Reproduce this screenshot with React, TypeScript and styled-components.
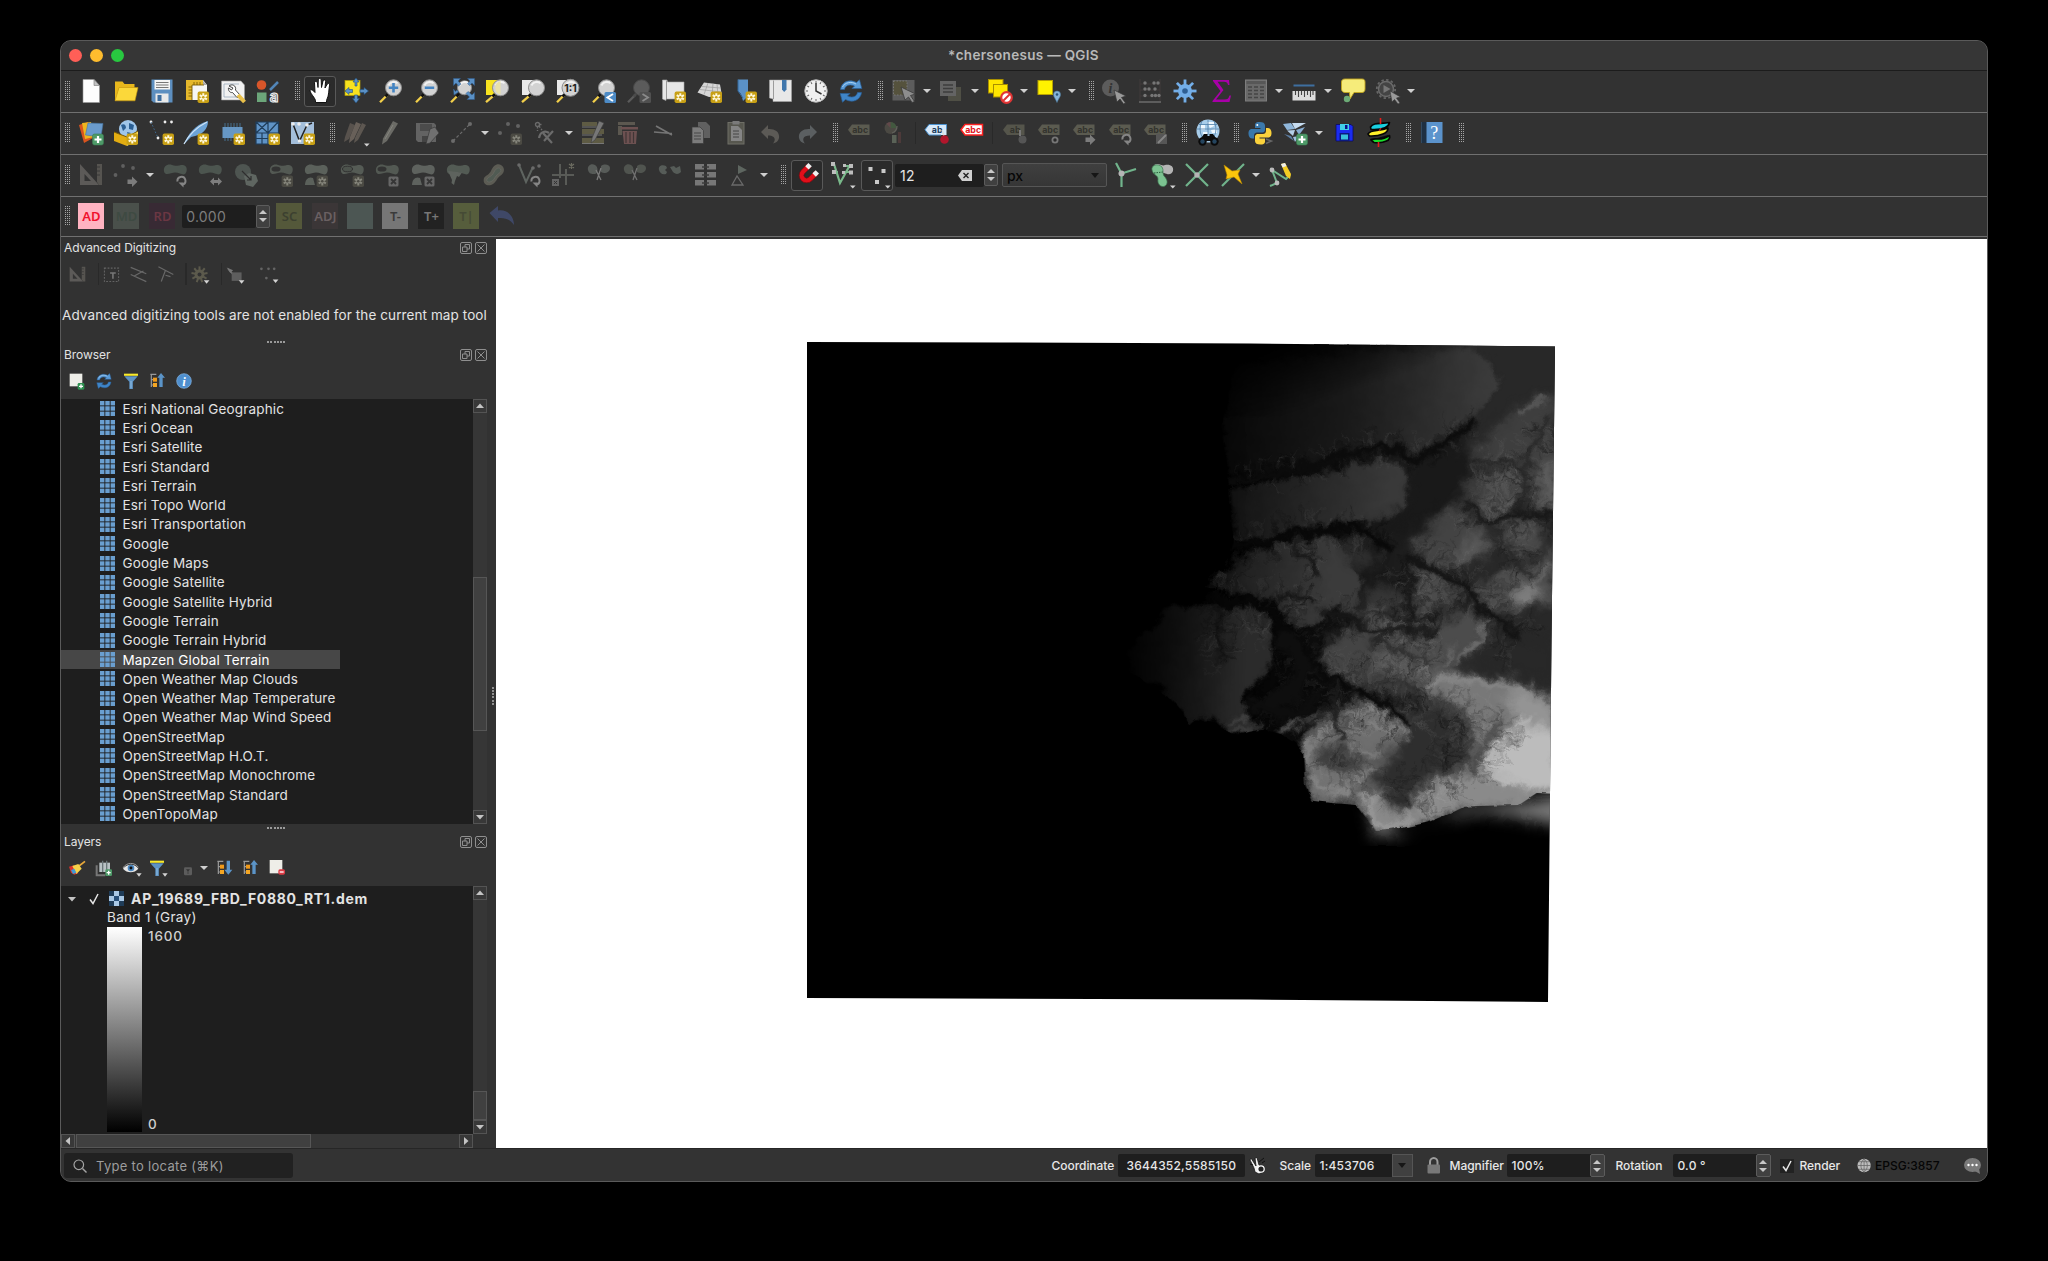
import React, { ReactNode } from 'react';
import styled, { createGlobalStyle } from 'styled-components';

const Global = createGlobalStyle`
  * { box-sizing: border-box; }
  body { margin: 0; background: #000; overflow: hidden; }
`;

const Desktop = styled.div`
  width: 2048px;
  height: 1261px;
  padding: 40px 60px 79px;
  background: #000;
  font-family: Inter, "Liberation Sans", sans-serif;
  color: #e3e3e3;
`;

const Window = styled.div`
  display: flex;
  flex-direction: column;
  width: 1928px;
  height: 1142px;
  border: 1px solid #5a5a5a;
  border-radius: 11px;
  overflow: hidden;
  background: #323232;
`;

const TitleBar = styled.header`
  display: grid;
  grid-template-columns: 100px 1fr 100px;
  align-items: center;
  height: 30px;
  flex: none;
  padding: 0 8.5px 1px 7.5px;
  background: #363636;
  border-bottom: 1px solid #1c1c1c;
`;

const Lights = styled.div`
  display: flex;
  gap: 8.4px;
`;

const Light = styled.span<{ $color: string }>`
  width: 13px;
  height: 13px;
  border-radius: 50%;
  background: ${(p) => p.$color};
`;

const WindowTitle = styled.h1`
  margin: 0;
  text-align: center;
  font-size: 13.5px;
  font-weight: 600;
  letter-spacing: 0.3px;
  color: #b9b9b9;
`;

const ToolbarRow = styled.div<{ $height?: number }>`
  display: flex;
  align-items: center;
  height: ${(p) => p.$height ?? 42}px;
  flex: none;
  padding-bottom: 1px;
  border-bottom: 1px solid #707070;
`;

const Handle = styled.span<{ $first?: boolean }>`
  display: flex;
  justify-content: flex-end;
  flex: none;
  width: ${(p) => (p.$first ? 12.3 : 17.1)}px;
  padding-right: 2px;
  &::after {
    content: '';
    width: 6px;
    height: 20px;
    background: repeating-linear-gradient(0deg, #333 0 1px, transparent 1px 2px),
      repeating-linear-gradient(90deg, #a6a6a6 0 1px, #333 1px 2px);
  }
`;

const ToolCell = styled.span`
  display: flex;
  align-items: center;
  justify-content: center;
  flex: none;
  width: 35.4px;
  height: 36px;
`;

const ToolButton = styled.span<{ $checked?: boolean }>`
  display: flex;
  align-items: center;
  justify-content: center;
  width: 32px;
  height: 31px;
  border-radius: 3px;
  border: 1px solid ${(p) => (p.$checked ? '#595959' : 'transparent')};
  background: ${(p) => (p.$checked ? '#2b2b2b' : 'transparent')};
`;

const MenuArrow = styled.span`
  display: flex;
  flex: none;
  width: 13px;
  padding-left: 1.5px;
  &::after {
    content: '';
    border: 4px solid transparent;
    border-top: 4.5px solid #d0d0d0;
    border-bottom: 0;
  }
`;

const Separator = styled.span<{ $gap?: number }>`
  flex: none;
  width: ${(p) => p.$gap ?? 6.5}px;
  height: 22px;
  background: linear-gradient(90deg, transparent 45%, #292929 45% 60%, transparent 60%);
`;

const Glyph = styled.svg<{ $size?: number }>`
  display: block;
  flex: none;
  width: ${(p) => p.$size ?? 24}px;
  height: ${(p) => p.$size ?? 24}px;
  overflow: visible;
`;

/* ---------- shared icon parts ---------- */

const Star = ({ off }: { off?: boolean }) => (
  <g>
    <rect x="12.6" y="12.6" width="11.4" height="11.4" rx="1.8" fill={off ? '#4b4a43' : '#c8a015'} />
    <path
      d="M18.3 14.2V22.4M14.7 16.2L21.9 20.4M21.9 16.2L14.7 20.4"
      stroke={off ? '#85857b' : '#fff8dc'}
      strokeWidth="2"
    />
    <circle cx="18.3" cy="18.3" r="1.3" fill={off ? '#4b4a43' : '#c8a015'} />
  </g>
);
const Plus = () => (
  <g>
    <rect x="13.5" y="13" width="11" height="11" rx="2" fill="#4e9a68" stroke="#3a7d52" strokeWidth=".6" />
    <path d="M19 15V22M15.5 18.5H22.5" stroke="#fff" strokeWidth="2.2" />
  </g>
);
const Cross = () => (
  <g>
    <rect x="13.5" y="13.5" width="10" height="10" rx="1.5" fill="#676767" />
    <path d="M16 16L21 21M21 16L16 21" stroke="#363636" strokeWidth="1.8" />
  </g>
);
const Corner = () => <path d="M20 22.6H25.6L22.8 25.4Z" fill="#d4d4d4" />;
const GoArrow = ({ c = '#7c7c7c' }: { c?: string }) => (
  <path d="M13.5 16.5H18V13.5L23.5 18.8L18 24V21H13.5Z" fill={c} />
);
const Rotate = () => (
  <g>
    <path d="M14.5 18.5A4 4 0 1 1 20 21.5" fill="none" stroke="#858585" strokeWidth="2" />
    <path d="M15.500 19.500H20.500V24.500Z" fill="#858585" />
  </g>
);
const Lens = ({ cx = 14.5, r = 8, off }: { cx?: number; r?: number; off?: boolean }) => (
  <g>
    <path d={`M1 23.2L${cx - 6} 15.8`} stroke={off ? '#5b5b5b' : '#f2cf4a'} strokeWidth="2.3" />
    <path d={`M${cx - 8} 17.5L${cx - 5.5} 14.8`} stroke={off ? '#4b4b4b' : '#111'} strokeWidth="2.6" />
    <circle cx={cx} cy="8.8" r={r} fill={off ? '#5b5b5b' : '#d2d2d2'} stroke={off ? '#484848' : '#8d8d8d'} strokeWidth="1" />
    {!off && <path d={`M${cx - 5} 6.5A6 6 0 0 1 ${cx + 4} 4.2`} stroke="#f2f2f2" strokeWidth="1.8" fill="none" />}
  </g>
);
const Tag = ({ fill = '#5b5b50', ink = '#33332e', text = 'abc', y = 3.5 }) => (
  <g>
    <path d={`M1 ${y + 5.2}L5 ${y}H22.5V${y + 10.5}H5Z`} fill={fill} />
    <text x="13.2" y={y + 8.4} fontSize="8.8" fontWeight="700" textAnchor="middle" fill={ink} fontFamily="Inter, sans-serif">
      {text}
    </text>
  </g>
);
const Blob = ({ c = '#5a605b' }: { c?: string }) => (
  <path d="M1 8.500C0 3 5 .5 9 2C12.500 3.800 16 2 20 2C24.500 2.500 24.500 8 22.500 10.500C20 13 17 9.500 12 9.500C8 9.500 2.500 13.500 1 8.500Z" fill={c} />
);
const Refresh = () => (
  <g>
    <path d="M1.5 10.5C2.500 3 10 -0.500 17.500 3.500L20.500 0.800L22.800 9.500L13 9.500L15.500 7C10 4.500 6 7 5.500 10.500Z" fill="#5a9bd8" stroke="#2a6099" strokeWidth=".7" />
    <path d="M22.500 13.500C21.500 21 14 24.500 6.500 20.500L3.500 23.200L1.200 14.500L11 14.500L8.500 17C14 19.500 18 17 18.500 13.500Z" fill="#3f85c8" stroke="#2a6099" strokeWidth=".7" />
    <path d="M3.500 8C6 3.500 12 2 17 5" stroke="#a8d0f2" strokeWidth="1" fill="none" />
  </g>
);
const Tree = ({ up }: { up?: boolean }) => (
  <g>
    <path d="M2 2H11M3.500 2V21M3.500 10H8M3.500 18H8" stroke="#9a9a9a" strokeWidth="1.800" fill="none" />
    <rect x="6" y="7" width="6" height="6" fill="#f09a1a" />
    <rect x="6" y="15" width="6" height="6" fill="#f5a623" />
    {up ? (
      <path d="M18 0L24 7H20.500V21H15.500V7H12.500Z" fill="#5b94c8" />
    ) : (
      <path d="M18.500 22L24.500 14.500H21V1H16V14.500H12.500Z" fill="#5b94c8" />
    )}
  </g>
);
const Funnel = () => (
  <g>
    <path d="M2 5H22L14.800 13V24H9.500V13Z" fill="#5d93c4" />
    <path d="M12 12V23" stroke="#91bde3" strokeWidth="1.500" />
    <rect x="1.500" y="1" width="21" height="3.200" fill="#f8ea2c" />
  </g>
);
const Gear = ({ c, hole = '#323232', n = 8, r = 7 }: { c: string; hole?: string; n?: number; r?: number }) => (
  <g>
    {Array.from({ length: n }, (_, i) => (
      <rect key={i} x="10.600" y={11.500 - r - 4} width="2.800" height="6" fill={c} transform={`rotate(${(i * 360) / n} 12 12)`} />
    ))}
    <circle cx="12" cy="12" r={r} fill={c} />
    <circle cx="12" cy="12" r={r * 0.4} fill={hole} />
  </g>
);
const Letters = ({ bg, ink, children }: { bg: string; ink: string; children: string }) => (
  <g>
    <rect x="-1" y="-1" width="26" height="26" fill={bg} />
    <text x="12.500" y="16.800" fontSize="13" fontWeight="600" textAnchor="middle" fill={ink} fontFamily='"Noto Sans", sans-serif'>
      {children}
    </text>
  </g>
);
const dots = (pts: number[][], c: string, r = 1.6) => pts.map(([x, y], i) => <circle key={i} cx={x} cy={y} r={r} fill={c} />);

/* ---------- icon set ---------- */

const icons: Record<string, ReactNode> = {
  newDoc: (
    <g>
      <path d="M4 .5H15L20.500 6.500V23.500H4Z" fill="#fdfdfd" stroke="#999" strokeWidth=".6" />
      <path d="M15 .5V6.500H20.500Z" fill="#c2c2c2" stroke="#777" strokeWidth=".6" />
    </g>
  ),
  open: (
    <g>
      <path d="M1 21.500V2.500H8.500L10.500 5H20.500V9H5L2 21.500Z" fill="#e8b71c" />
      <path d="M5 8.500H24L21 21.800H1Z" fill="#fbd83a" stroke="#c4930c" strokeWidth=".6" />
    </g>
  ),
  save: (
    <g>
      <path d="M1.500 .5H22.500V23.500H3.500L1.500 21.500Z" fill="#5d8fc0" />
      <rect x="4.500" y="1" width="15.500" height="9.500" fill="#f4f4f4" />
      <path d="M6 3.500H18.500M6 6H18.500M6 8.500H18.500" stroke="#777" strokeWidth="1" />
      <rect x="5.500" y="14.500" width="13" height="9" fill="#e9e9e9" />
      <rect x="7.500" y="16" width="4" height="6" fill="#3f6fa0" />
    </g>
  ),
  layout: (
    <g>
      <path d="M1 1H18L22 6V21H1Z" fill="#f6f6f6" />
      <path d="M17 1V6H22Z" fill="#aaa" />
      <path d="M1 1H18V6H7V21H1Z" fill="#e5b82c" />
      <path d="M7 6H19M7 6V21M3.500 8H7M3.500 11H7M3.500 14H7M3.500 17H7M9 3V6M12 3V6M15 3V6" stroke="#7a5c00" strokeWidth=".9" />
      <Star />
    </g>
  ),
  layoutMgr: (
    <g>
      <path d="M.5 2H20L23.500 6V21H.5Z" fill="#f2f2f2" stroke="#999" strokeWidth=".6" />
      <path d="M3 5H18M3 5V18H18" fill="none" stroke="#9ab" strokeWidth=".8" />
      <path d="M8 7C11 4.500 15.500 6.500 14.500 11L19 16L16 18.500L11.500 13.500C8.500 14 7 11 7.500 9L10.500 11L12 9Z" fill="#fff" stroke="#333" strokeWidth=".9" />
      <path d="M17 16L23.500 23" stroke="#e9c04a" strokeWidth="4" />
    </g>
  ),
  style: (
    <g>
      <circle cx="5.500" cy="6" r="4.800" fill="#d9562a" />
      <path d="M14 11L22 3" stroke="#5286b8" strokeWidth="2.500" />
      <rect x="1" y="13.500" width="9.500" height="9.500" fill="#6ca67a" />
      <text x="18" y="23" fontSize="15" fontWeight="700" textAnchor="middle" fill="#777" stroke="#f2f2f2" strokeWidth="1" fontFamily="Inter, sans-serif">a</text>
    </g>
  ),
  pan: (
    <path
      transform="translate(1 -.5)"
      d="M6.500 22C6 19.500 1.500 15 1 12.500C1 10.500 3.500 10.800 6 14L5.500 4.500C5.500 2.500 8 2.500 8.500 4.500L9 9L9.300 1.500C9.500 -0.500 12 -0.500 12.200 1.500L12.500 9L14 2.500C14.500 .8 16.800 1.200 16.600 3L16 9.500L18.300 5.500C19.500 4 21 5 20.600 6.600C19.500 11 20.500 16 17.500 22V24H6.500Z"
      fill="#fff" stroke="#111" strokeWidth="1"
    />
  ),
  panSel: (
    <g>
      <rect x="1" y="1.500" width="15" height="15" fill="#f7e21f" stroke="#b7a000" strokeWidth=".7" />
      <g fill="#5a90c5" stroke="#24507c" strokeWidth=".6">
        <path d="M12 -1L15 3H13V7H11V3H9Z" />
        <path d="M12 24L15.500 19.500H13.500V16H10.500V19.500H8.500Z" />
        <path d="M24.500 12L20 8.500V10.500H16V13.500H20V15.500Z" />
        <path d="M1 12L5 8.500V10.500H8.500V13.500H5V15.500Z" />
      </g>
    </g>
  ),
  zoomIn: (
    <g><Lens /><path d="M14.500 4V13.500M9.800 8.800H19.200" stroke="#4484c2" strokeWidth="2.600" /></g>
  ),
  zoomOut: (
    <g><Lens /><path d="M9.800 8.800H19.200" stroke="#4484c2" strokeWidth="2.600" /></g>
  ),
  zoomFull: (
    <g>
      <Lens r={7} />
      <g fill="#5a90c5" stroke="#2c5d90" strokeWidth=".5">
        <path d="M3.500 -.5H10.500L8 2L11 5L8.500 7L6 4L3.500 6.500Z" />
        <path d="M24.500 -.5V6.500L22 4L19.500 6.500L17.500 4.500L20 2L17.500 -.5Z" />
        <path d="M24.500 20.500H17L19.500 18L16 14.500L18 12.500L22 16L24.500 13.500Z" />
        <path d="M3.500 10L5.500 12.500L7 11L8.500 13L4 16Z" />
      </g>
    </g>
  ),
  zoomSel: (
    <g><rect x="1" y="1" width="13" height="15" fill="#f7e21f" /><Lens cx={15.500} /><path d="M15.500 2A7 7 0 0 0 15.500 15.600Z" fill="#e9e1a8" /></g>
  ),
  zoomLayer: (
    <g><rect x="1" y="1" width="13" height="15" fill="#e9e9e9" /><Lens cx={15.500} /></g>
  ),
  zoomNative: (
    <g>
      <rect x="1" y="1" width="13" height="15" fill="#e9e9e9" /><Lens cx={14.500} r={8.500} />
      <text x="14.500" y="12.600" fontSize="10.500" fontWeight="700" textAnchor="middle" fill="#222" fontFamily="Inter, sans-serif">1:1</text>
    </g>
  ),
  zoomLast: (
    <g><Lens /><rect x="12.500" y="13" width="11.500" height="11" rx="1.500" fill="#4d8bc6" /><path d="M21 15L15.500 18.500L21 22" stroke="#fff" strokeWidth="2" fill="none" /></g>
  ),
  zoomNext: (
    <g><Lens off /><rect x="12.500" y="13" width="11.500" height="11" rx="1.500" fill="#505050" /><path d="M15.500 15L21 18.500L15.500 22" stroke="#8a8a8a" strokeWidth="1.800" fill="none" /></g>
  ),
  mapView: (
    <g><path d="M.5 1H5L5.500 3H22V20H4V21.500L.5 20Z" fill="#e6e6e6" stroke="#aaa" strokeWidth=".6" /><path d="M4.500 1.500V20" stroke="#999" /><Star /></g>
  ),
  view3d: (
    <g><path d="M6 3.500L22 5.500L24 17L11 18L-.5 13.500Z" fill="#d6d6d6" /><path d="M4 7.500L22.500 9M2 10.500L23 13M10 4L6 15.500M15 4.500L14 17.500M19 5L20 17" stroke="#9c9c9c" strokeWidth=".7" /><Star /></g>
  ),
  bookmarkNew: (<g><path d="M5 .5H15V17L10 22L8 15L5 12Z" fill="#5b91c6" /><path d="M5 .5V12L10 19" stroke="#33689c" fill="none" /><Star /></g>),
  bookmarks: (
    <g><path d="M.5 1H22.500V22.500H4V20L.5 19Z" fill="#e8e8e8" stroke="#aaa" strokeWidth=".5" /><path d="M4.500 1.500V20" stroke="#9c9c9c" /><path d="M13 1H17.500V10.500L15.200 13L13 10.500Z" fill="#3f76ac" /></g>
  ),
  clock: (
    <g>
      <circle cx="12" cy="12" r="11.200" fill="#f0f0f0" stroke="#bbb" />
      {Array.from({ length: 12 }, (_, i) => <path key={i} d="M12 2V4" stroke="#666" strokeWidth="1" transform={`rotate(${i * 30} 12 12)`} />)}
      <path d="M12 4V12L17.500 15" stroke="#333" strokeWidth="1.500" fill="none" />
    </g>
  ),
  refresh: <Refresh />,
  selectRect: (
    <g><rect x=".5" y="1" width="22" height="20.500" fill="#5c5c5c" /><rect x="1.500" y="2" width="13.500" height="14" fill="#55523d" stroke="#777" strokeDasharray="1.500 1.500" /><path d="M9 8L23.500 15L18.500 16.500L22.500 22.500L20 23.500L16.500 18L13 21Z" fill="#8d8d8d" stroke="#3a3a3a" strokeWidth=".8" /></g>
  ),
  selectForm: (<g><rect x="0" y="2" width="16" height="15" fill="#646464" /><path d="M3 6H13M3 9.500H13M3 13H13" stroke="#3d3d3d" strokeWidth="1.300" /><path d="M16 8H21V22H8V17H16Z" fill="#4f4f45" /></g>),
  deselect: (
    <g><rect x="-.5" y=".5" width="14.500" height="13.500" fill="#ffe600" stroke="#a88f00" /><rect x="4.500" y="5.500" width="14" height="12.500" fill="#ffe600" stroke="#a88f00" /><circle cx="17.500" cy="18.500" r="5.300" fill="#fff" stroke="#e03434" strokeWidth="2.200" /><path d="M14 22L21 15" stroke="#e03434" strokeWidth="2" /></g>
  ),
  selectLoc: (
    <g><rect x="1" y="1.500" width="14.500" height="14" fill="#fff200" stroke="#b8a200" /><path d="M20 23.500C18.500 19.500 16.500 18 16.500 15.500A3.500 3.500 0 0 1 23.500 15.500C23.500 18 21.500 19.500 20 23.500Z" fill="#86b4d8" stroke="#4c7a9f" strokeWidth=".6" /><circle cx="20" cy="15.500" r="1.300" fill="#29547a" /></g>
  ),
  identify: (
    <g><circle cx="8.500" cy="9" r="8.500" fill="#5c5c5c" /><text x="8.500" y="14" fontSize="14" fontStyle="italic" fontWeight="700" textAnchor="middle" fill="#333" fontFamily='"Liberation Serif", serif'>i</text><path d="M12 11L24 17L19.500 18.500L23.500 24L21.500 25L18 20L15 23Z" fill="#9a9a9a" stroke="#333" strokeWidth=".7" /></g>
  ),
  fieldCalc: (
    <g><path d="M2 0V22M22 0V22M2 5H22M2 11H22M2 17H22" stroke="#403b3b" strokeWidth="1" /><path d="M1 23H23" stroke="#6c6c6c" strokeWidth="1.500" />{dots([[7, 4], [16, 4], [20, 4], [7, 10], [11, 10], [17, 10], [7, 16.500], [14, 16.500], [17.500, 16.500], [21, 16.500]], '#767676', 1.700)}</g>
  ),
  toolbox: <Gear c="#73aee8" hole="#2f5f94" />,
  sigma: (<path d="M4 1H20L20.500 6H19C18.500 3.500 17.500 2.700 15 2.700H8.500L14.500 11L7 20.500H15.500C18.500 20.500 19.500 19.500 20.500 16.500H22L20.500 23H3.500V22L11.500 12L4 2Z" fill="#a800a8" />),
  table: (<g><rect x="1.500" y="1" width="21" height="21" fill="#696969" stroke="#7d7d7d" /><rect x="2.500" y="2" width="19" height="3" fill="#575757" /><path d="M4 8H8M10 8H14M16 8H20M4 11.500H8M10 11.500H14M16 11.500H20M4 15H8M10 15H14M16 15H20M4 18.500H8M10 18.500H14M16 18.500H20" stroke="#444" strokeWidth="1.600" /></g>),
  measure: (<g><rect x="1.500" y="5.500" width="21" height="2" fill="#3e6f9f" /><rect x=".5" y="12" width="23" height="9.500" fill="#dcdcdc" /><path d="M3.500 12V16M6.500 12V18M9.500 12V16M12.500 12V18M15.500 12V16M18.500 12V18M21 12V16" stroke="#444" strokeWidth="1.100" /></g>),
  tips: (<g><path d="M4 0H21C23 0 24 1 24 3V10C24 12 23 13.500 21 13.500H13L9 20L8.500 13.500H4C2 13.500 .5 12 .5 10V3C.5 1 2 0 4 0Z" fill="#f6ec7a" stroke="#c3a61d" strokeWidth=".9" /><circle cx="6" cy="20" r="3.200" fill="#6cab76" /></g>),
  action: (
    <g>
      <circle cx="10" cy="10" r="9.200" fill="none" stroke="#666" strokeWidth="1.800" strokeDasharray="2.400 2.400" />
      <circle cx="10" cy="10" r="7.500" fill="#444" stroke="#6b6b6b" strokeWidth="1.500" />
      <path d="M7.500 6L14.500 10L7.500 14Z" fill="#777" />
      <path d="M14 12L24.500 18L20.500 19L24 24L22 25L18.500 20.500L16 23Z" fill="#999" stroke="#333" strokeWidth=".6" />
    </g>
  ),

  dsm: (<g><path d="M0 4L9 1L14 17L5 22Z" fill="#d9541e" /><path d="M3 2L12 1L15 16L6 18Z" fill="#eeb51f" /><path d="M9 2L24 2.500L22 16L6.500 14Z" fill="#6a9bcc" stroke="#44739f" strokeWidth=".6" /><Plus /></g>),
  geopackage: (
    <g><circle cx="14" cy="8" r="9" fill="#9fc6ea" /><path d="M7 4C10 2 12 4 12 7L9 10ZM15 2L20 4L19 9L15 8ZM13 11L17 12L14 14Z" fill="#2a5f94" /><path d="M0 11L13 16V25L0 20Z" fill="#e3ad12" /><path d="M13 16L24 10V19L13 25Z" fill="#f7d95c" /><path d="M0 11L13 16L24 10" stroke="#7a5b00" fill="none" /><Star /></g>
  ),
  shapefile: (<g>{dots([[1, 1], [15, 1], [21.500, 1], [8, 17]], '#eee', 1.400)}<path d="M1 1L8 17" stroke="#3e6b94" strokeWidth="1" strokeDasharray="1.500 2" /><Star /></g>),
  spatialite: (<g><path d="M-1 23C3 14 9 4 23 0C23 8 18 14 6 16Z" fill="#6ca3d6" /><path d="M-1 23C5 12 12 6 22 1" stroke="#cfe4f6" fill="none" strokeWidth="1.200" /><Star /></g>),
  memory: (<g><rect x="1.500" y="6" width="20" height="11" fill="#6797c4" /><path d="M4 2V6M7 2V6M10 2V6M13 2V6M16 2V6M19 2V6M4 17V20M7 17V20M10 17V20" stroke="#47718f" strokeWidth="1" /><Star /></g>),
  mesh: (<g><rect x="0" y="1" width="22.500" height="22" fill="#5f93c6" /><path d="M0 1H22.500V23H0ZM0 12H22.500M12 1V23M0 1L12 12L22 1M0 12L12 1M0 17.500H12M6 12V23" stroke="#1f3d5a" strokeWidth="1.200" fill="none" /><Star /></g>),
  virtual: (<g><rect x="0" y="1" width="23" height="22" fill="#a4bfdb" /><path d="M2 3L8.500 20L16 4L21 2" stroke="#222" strokeWidth="1.500" fill="none" />{dots([[2, 3], [8.500, 20], [16, 4], [8, 3]], '#eee', 1.800)}<Star /></g>),
  editsCurrent: (<g fill="#686059"><path d="M6 2L11 4L5 18L0 21L1 16Z" opacity=".7" /><path d="M12 1L17 3L10 18L5 22L6 16Z" /><path d="M18 2L22 4L14 19L10 22L11 17Z" opacity=".8" /><Corner /></g>),
  pencil: (<g><path d="M14 0L19 2.500L8 20L3 23.500L4 17.500Z" fill="#6b6b66" /><path d="M14 4L6 18" stroke="#84847d" strokeWidth="1" /></g>),
  saveEdits: (<g><path d="M1 2H19L21 4V21H3L1 19Z" fill="#636363" /><rect x="5" y="3" width="12" height="7" fill="#4b4b4b" /><path d="M7 15H14V21H7Z" fill="#444" /><path d="M15 8L20 6L24 12L15 22L11 23L12 19Z" fill="#707070" stroke="#3a3a3a" strokeWidth=".7" /></g>),
  addLine: (<g><path d="M3 20L20 3" stroke="#6b6b6b" strokeWidth="1.200" strokeDasharray="3 2" />{dots([[3, 20], [20, 3]], '#6b6b6b', 2)}</g>),
  addPoint: (<g>{dots([[2, 12], [10, 3], [20, 5]], '#626262', 2)}<Star off /></g>),
  vertex: (<g stroke="#6b6b6b" strokeWidth="1.400" fill="none"><circle cx="3.500" cy="3.500" r="2" /><path d="M5.500 3.500H9M3.500 5.500V10M5 5L8 9" strokeDasharray="2 1.500" /><path d="M9 12L18 22M10 20L19 10" strokeWidth="2.200" /><path d="M5 17C6 11 11 9 15 12" strokeWidth="2.200" /></g>),
  multiEdit: (<g><path d="M0 1H15V5H0ZM0 8H22V13H0ZM0 17H22V22H0Z" fill="#5e5b44" /><path d="M0 6H18M0 14H20M0 22.500H22" stroke="#777" /><path d="M17 0L22 2L13 19L9 22L10 17Z" fill="#777" stroke="#3c3c3c" strokeWidth=".6" /></g>),
  trash: (<g><path d="M0 1H17V4H0ZM0 5H4V14H0Z" fill="#5c5850" /><path d="M3 6H20V8.500H3ZM4.500 10H19L18 23H6Z" fill="#6d5151" /><path d="M8 11V22M12 11V22M15.500 11V22" stroke="#403636" strokeWidth="1.200" /></g>),
  cut: (<path d="M3 5L19 14M1 11L19 12.500" stroke="#757575" strokeWidth="1.700" />),
  copy: (<g><path d="M10 1H18L22 5V17H10Z" fill="#606060" /><path d="M4 6H12L15.500 9.500V22.500H4Z" fill="#7c7c7c" stroke="#3b3b3b" strokeWidth=".7" /><path d="M6 12H13M6 15H13M6 18H13" stroke="#474747" /></g>),
  paste: (<g><rect x="4" y="1.500" width="16" height="21.500" fill="#57574f" stroke="#6e6e66" /><path d="M7 5H14L18 9V20H7Z" fill="#858585" /><path d="M9 10H15M9 13H15M9 16H15" stroke="#444" /><rect x="8.500" y="0" width="7" height="3.500" fill="#7a7a7a" /></g>),
  undo: (<path d="M2 11L9 4V8C16 7.500 21 11 20 17C19.500 20 17 22 14 22.500C17 19 16.500 14.500 9 14.500V18Z" fill="#5c5a56" />),
  redo: (<path d="M22 11L15 4V8C8 7.500 3 11 4 17C4.500 20 7 22 10 22.500C7 19 7.500 14.500 15 14.500V18Z" fill="#5b5f61" />),
  label: <Tag />,
  diagram: (<g><circle cx="8.500" cy="7" r="6" fill="#4b4943" /><path d="M8.500 7L8.500 1A6 6 0 0 1 14.500 7Z" fill="#42583f" /><path d="M8.500 7L4.300 2.800A6 6 0 0 1 8.500 1Z" fill="#62484a" /><path d="M10 12C13 11 15 8 15 5" stroke="#60605a" strokeWidth="1.300" fill="none" /><rect x="10" y="14" width="4.500" height="8" fill="#5a6257" /><rect x="16" y="11" width="3" height="11" fill="#4d3a3a" /></g>),
  labelPin: (<g><Tag fill="#d7eafb" ink="#1d3d5c" text="ab" /><path d="M18 9L20 15" stroke="#ddd" strokeWidth="1.500" /><circle cx="20.500" cy="18.500" r="4.300" fill="#b1162c" /><path d="M1 8.700L5 3.500H22.500V8M1 8.700L5 14H17" fill="none" stroke="#4c93d0" strokeWidth="1" /></g>),
  labelRed: (<g><Tag fill="#fff" ink="#e01525" /><path d="M1 8.700L5 3.500H22.500V14H5Z" fill="none" stroke="#f22" strokeWidth="1.500" /></g>),
  labelPinOff: (<g><Tag text="ab" fill="#55554b" /><circle cx="20.500" cy="18.500" r="4" fill="#555" /><path d="M18 9V15" stroke="#777" strokeWidth="2" /></g>),
  labelShow: (<g><Tag /><circle cx="18" cy="19" r="3.500" fill="#777" /><circle cx="18" cy="19" r="1.700" fill="#2a2a2a" /></g>),
  labelMove: (<g><Tag /><GoArrow /></g>),
  labelRotate: (<g><Tag /><Rotate /></g>),
  labelEdit: (<g><Tag /><rect x="13" y="13" width="11" height="10" fill="#565656" /><path d="M15 22L23 14" stroke="#858585" strokeWidth="2" /></g>),
  search: (
    <g><circle cx="12" cy="10" r="11.500" fill="#a8cdea" /><path d="M4 4H9V9H5ZM11 1H18V5L14 7ZM7 11H12V13H7ZM15 9L21 7V12H16Z" fill="#eef7fe" /><path d="M1 8H23M3 3.500H21M12 -1V14M6 0Q2 8 6 16M18 0Q22 8 18 16" stroke="#4e7fa8" strokeWidth=".8" fill="none" /><path d="M8 13H11.500V15H13.500V13H17L22 20H3Z" fill="#0a0a0a" /><circle cx="6.500" cy="20.500" r="4.200" fill="#0a0a0a" /><circle cx="18.500" cy="20.500" r="4.200" fill="#0a0a0a" /><circle cx="6.500" cy="20.500" r="2.200" fill="#24445e" /><circle cx="18.500" cy="20.500" r="2.200" fill="#24445e" /></g>
  ),
  python: (
    <g><path d="M11.500 1C7 1 7 3 7 4.500V7H12.500V8H4C1 8 .5 10.500 .5 12.500S1.500 17.500 4 17.500H6V14.500C6 12.500 7.500 11.500 9 11.500H14.500C16 11.500 17 10 17 9V4.500C17 2 15 1 11.500 1Z" fill="#3a78ab" /><circle cx="9.300" cy="4" r="1" fill="#fff" /><path d="M12.500 23.500C17 23.500 17 21.500 17 20V17.500H11.500V16.500H20C23 16.500 23.500 14 23.500 12S22.500 7 20 7H18V10C18 12 16.500 13 15 13H9.500C8 13 7 14.500 7 15.500V20C7 22.500 9 23.500 12.500 23.500Z" fill="#fbd23c" /><path d="M18 18L23.500 20L18 22.500" stroke="#666" strokeWidth="1.500" fill="none" /></g>
  ),
  meshTool: (<g><path d="M0 3L8 2L12 8L4 9Z" fill="#8fb6da" /><path d="M9 2H23L12 8Z" fill="#c6dcf0" /><path d="M4 9.500L12 9L10 15Z" fill="#b4cfe8" /><path d="M13 9L22 6L16 14Z" fill="#87aed4" /><path d="M10 16L16 15L12 21Z" fill="#9fc0e0" /><path d="M1 13L8 15L11 20Z" fill="#5c7da0" /><Plus /></g>),
  floppy: (<g><path d="M4 3.500H19L21 5.500V20H4Z" fill="#1b2cf0" stroke="#0a0a5c" strokeWidth=".8" /><rect x="8" y="3" width="9" height="6" fill="#41d0e8" /><rect x="13" y="4" width="2.500" height="4" fill="#0a108a" /><rect x="7.500" y="12" width="10" height="8" fill="#0b1a80" /><rect x="9" y="13.500" width="7" height="5" fill="#38c0dd" /></g>),
  stack: (
    <g>
      <path d="M3 19L21 14L22 20L6 22Z" fill="#0c0c0c" />
      <g strokeWidth="1.600" stroke="#050505" strokeLinejoin="round">
        <path d="M4 18.500C10 16.500 14 20.500 22.500 14.500C24 19 18 22.500 7 21.500Z" fill="#19dd2c" />
        <path d="M1 13C4 8 12 11 21 7C21.500 12 13 15.500 2.500 15Z" fill="#fff02a" />
        <path d="M3.500 6C7 .5 14 3.500 22.500 1.500C21.500 7 14 9 4 8.500Z" fill="#19cfe0" />
      </g>
      <path d="M13.500 -3V3M11.500 21V26" stroke="#e61a1a" strokeWidth="1.600" />
      <path d="M14 7L12 10" stroke="#c22" strokeWidth="1.200" />
    </g>
  ),
  help: (<g><rect x="1.500" y="1" width="21" height="21" fill="#5b93cc" /><rect x="1.500" y="1" width="5" height="21" fill="#1f3042" /><text x="14.300" y="18" fontSize="18" textAnchor="middle" fill="#fff" fontFamily='"Liberation Serif", serif'>?</text></g>),

  cad: (<g><path d="M1 1V22H20Z" fill="#5c5a58" /><path d="M5.500 11V18H12Z" fill="#333" /><path d="M18 1H23V22H20L18 19Z" fill="#565450" /><path d="M18 4H21M18 8H21M18 12H21" stroke="#383838" /></g>),
  moveFeat: (<g>{dots([[1.500, 12], [9, 3], [19, 5]], '#5f5f5f', 1.900)}<GoArrow /></g>),
  blobRotate: (<g><Blob c="#4c554f" /><Rotate /></g>),
  blobScale: (<g><Blob c="#4c554f" /><path d="M12 18.500L16 14.500V17H20V14.500L24 18.500L20 22.500V20H16V22.500Z" fill="#7e7e7e" /></g>),
  simplify: (<g><circle cx="9" cy="9" r="8" fill="#4e5551" /><path d="M10 13L15 10L22 12L24 18L19 24L12 22Z" fill="#5f6661" /><path d="M8 8L17 17M17 13V17H13" stroke="#2e2e2e" strokeWidth="1.200" fill="none" /></g>),
  addRing: (<g><Blob c="#535953" /><ellipse cx="7" cy="6" rx="4.500" ry="2.600" fill="#333" /><Star off /></g>),
  addPart: (<g><Blob c="#5b615b" /><path d="M1 22C1 16 5 13 9 15L11 22Z" fill="#5b615b" /><Star off /></g>),
  fillRing: (<g><Blob c="#555b55" /><ellipse cx="7.500" cy="6" rx="5" ry="2.800" fill="#4d534d" stroke="#303030" strokeWidth="1" /><Star off /></g>),
  delRing: (<g><Blob c="#535953" /><ellipse cx="7" cy="6" rx="4.500" ry="2.600" fill="#333" /><Cross /></g>),
  delPart: (<g><Blob c="#5e625e" /><path d="M1 22C1 16 5 13 9 15L11 22Z" fill="#5e625e" /><Cross /></g>),
  reshape: (<g><Blob c="#535b54" /><path d="M2 8L16 9.500L13 14L11 13L9 18L8 22L5.500 20L6 17Z" fill="#5e635e" /></g>),
  offset: (<g><path d="M3 15C5 12 8 12 10 8C12 3 16 0 20 2C25 5 23 11 19 13C16 15 16 18 12 21C8 24 1 22 3 15Z" fill="#5c5c54" /><path d="M6 16C8 13 11 14 13 9C15 5 18 4 19.500 6C21 9 18 10 16 12C13 15 13 18 9 19C7 19.500 5 18 6 16Z" fill="#515b53" stroke="#6c6c66" strokeWidth=".7" /></g>),
  splitFeat: (<g><path d="M2 2L9 19L16 4" stroke="#5e6460" strokeWidth="2" fill="none" />{dots([[2, 2], [16, 5], [22, 3]], '#6a6a6a', 1.800)}<Rotate /></g>),
  trim: (<g><path d="M8 1V15M14 6V22M0 12H22" stroke="#595b57" strokeWidth="2" /><rect x="0" y="16" width="7" height="7" fill="#646464" /><path d="M2 18L5 21M5 18L2 21" stroke="#333" /><path d="M17 1L22 5M22 1L17 5M19.500 0V6" stroke="#6b6b60" strokeWidth="1.200" /></g>),
  splitA: (<g><path d="M1 7C0 3 4 0 8 2C12 4 11 12 7 11C3 11 2 10 1 7ZM14 3C18 0 23 2 23 5C23 10 17 11 14 9Z" fill="#575b58" /><path d="M10 17L14 5M14 17L9 7" stroke="#7b7b7b" strokeWidth="1.300" /></g>),
  splitB: (<g><path d="M1 7C0 3 4 0 8 2C12 4 11 12 7 11C3 11 2 10 1 7ZM14 3C18 0 23 2 23 5C23 10 17 11 14 9Z" fill="#50544f" /><path d="M10 17L14 5M14 17L9 7" stroke="#717171" strokeWidth="1.300" /></g>),
  mergeF: (<g><path d="M1 7C0 3 4 1 8 3L9 5L7 7L9 9L8 11C4 12 2 10 1 7ZM12 4L16 3L18 5L22 3L23 9C20 12 17 11 15 9Z" fill="#565c58" /></g>),
  mergeAttr: (<g fill="#777"><rect x="1" y="1" width="9" height="5.500" /><rect x="13" y="1" width="9" height="5.500" /><rect x="1" y="9" width="9" height="5.500" /><rect x="13" y="9" width="9" height="5.500" /><rect x="1" y="17" width="9" height="5.500" /><rect x="13" y="17" width="9" height="5.500" /><path d="M8 4H15M8 12H15M8 20H15" stroke="#3c3c3c" strokeWidth="1.400" /></g>),
  rotSym: (<g><path d="M9 2L18 7L9 11Z" fill="#5e6660" /><path d="M8 13L3 22H14Z" fill="none" stroke="#6a6a6a" strokeWidth="1.300" /></g>),
  magnet: (
    <g transform="rotate(45 12 12)"><path d="M4.500 4V12.500A7.500 7.500 0 0 0 19.500 12.500V4H14.700V12.500A2.700 2.700 0 0 1 9.300 12.500V4Z" fill="#e10f1a" stroke="#7d060c" strokeWidth=".6" /><rect x="4.500" y="2.500" width="4.800" height="4.500" fill="#f0f0f0" /><rect x="14.700" y="2.500" width="4.800" height="4.500" fill="#f0f0f0" /></g>
  ),
  snapV: (<g><path d="M4 1L10 20L20 2M3 9H8M13 9H22M14 3H22" stroke="#79b88a" strokeWidth="2.200" fill="none" /><g fill="#bdbdbd"><rect x="1" y="-1" width="4" height="4" /><rect x="2" y="7" width="4" height="4" /><rect x="19" y="1" width="4" height="4" /><rect x="19" y="7.500" width="4" height="4" /><rect x="13" y="1" width="3" height="3" /><rect x="12" y="8" width="3" height="3" /></g><Corner /></g>),
  snapDots: (<g fill="#c9c9c9"><rect x="3.500" y="4" width="4" height="4" /><rect x="16.500" y="6" width="4" height="4" /><rect x="10" y="17" width="4" height="4" /><Corner /></g>),
  topo: (<g><path d="M1 0L6.500 10.500L21 6M6.500 10.500V24" stroke="#71b48c" strokeWidth="2.200" fill="none" /><circle cx="6.500" cy="10.500" r="3" fill="#b5b5b5" /></g>),
  overlap: (<g><path d="M4 2C9 -1 12 4 15 2C20 1 24 3 23 8C21 13 17 11 14 10C8 11 3 8 4 2Z" fill="#b4b4b4" /><path d="M2 7C1 2 8 0 12 4C14 7 12 10 14 13C18 17 18 21 15 23C11 25 7 21 8 16C8 12 3 12 2 7Z" fill="#7cc391" stroke="#3d7450" strokeWidth=".7" /><path d="M4 10L13 9" stroke="#275a39" strokeDasharray="1.500 1" /><Corner /></g>),
  snapX: (<g><path d="M1 1L23 23M23 1L1 23" stroke="#71b48c" strokeWidth="2.200" /><circle cx="12" cy="12" r="2.700" fill="#b5b5b5" /></g>),
  tracing: (<g><path d="M23 1L1 23" stroke="#71b48c" strokeWidth="2.200" /><path d="M3 2L11 8L19 7L17 11L21 21L13 14L5 16L6 12Z" fill="#fbc60c" stroke="#b88600" strokeWidth=".6" /></g>),
  selfSnap: (<g><path d="M1 23L8 20L3 7L17 16L21 12" stroke="#71b48c" strokeWidth="2" fill="none" />{dots([[3, 7], [8, 20]], '#bbb', 2.400)}<path d="M12 1L16 0L22 11L21 16L17 13Z" fill="#f4cc23" /><path d="M12 1L16 0L17.500 3L13.500 4.500Z" fill="#eee" /></g>),

  ad: <Letters bg="#ffb3c1" ink="#f0102c">AD</Letters>,
  md: <Letters bg="#4a504b" ink="#3e4a42">MD</Letters>,
  rd: <Letters bg="#382a34" ink="#6b3743">RD</Letters>,
  sc: <Letters bg="#54583a" ink="#3c4030">SC</Letters>,
  adj: <Letters bg="#3b3637" ink="#6a6062">ADJ</Letters>,
  blank: <rect x="-1" y="-1" width="26" height="26" fill="#4c5653" />,
  tMinus: <Letters bg="#767676" ink="#3a3a3a">T-</Letters>,
  tPlus: <Letters bg="#222" ink="#777">T+</Letters>,
  tt: <Letters bg="#565d3c" ink="#454a35">T|</Letters>,
  back: (<path d="M-.5 9L8 2V6.500C16 5 24 11 24 21C20 15 15 13.500 8 14V18Z" fill="#3f4867" />),

  // dock toolbars
  construct: (<g><rect x="2" y="3" width="20" height="19" fill="none" stroke="#646464" strokeWidth="1.500" strokeDasharray="2.500 2" /><path d="M10 10H18M14 10V18" stroke="#777" strokeWidth="2.200" /></g>),
  parallel: (<path d="M1 2L23 11M1 12L23 22M6 14L19 7" stroke="#686868" strokeWidth="1.700" />),
  perpend: (<path d="M2 1L23 12M12 6L6 22M12 13L19 15" stroke="#686868" strokeWidth="1.700" fill="none" />),
  gearOff: (<g><Gear c="#5c5a4c" n={9} /><path d="M18 20H26L22 25Z" fill="#d4d4d4" /></g>),
  snapCursor: (<g><path d="M1 2L10 6L6 10Z" fill="#777" /><path d="M3 4L10 12" stroke="#777" strokeWidth="2" /><rect x="8" y="9" width="14" height="12" fill="#5e5e5e" /><path d="M18 20H26L22 25Z" fill="#d4d4d4" /></g>),
  floatDots: (<g>{dots([[2, 4], [12, 4], [20, 4], [9, 17]], '#646464', 1.900)}<path d="M18 19H26L22 24Z" fill="#d4d4d4" /></g>),
  addItem: (<g><rect x="1" y="1" width="19" height="19" fill="#eeeee8" /><rect x="13" y="15" width="10" height="10" rx="2" fill="#2e9150" /><path d="M18 17V23M15 20H21" stroke="#fff" strokeWidth="2" /></g>),
  funnel: <Funnel />,
  treeUp: <Tree up />,
  treeDown: <Tree />,
  info: (<g><circle cx="12" cy="12" r="11" fill="#4f8fce" stroke="#86b7e6" /><text x="12" y="19" fontSize="19" fontStyle="italic" fontWeight="700" textAnchor="middle" fill="#fff" fontFamily='"Liberation Serif", serif'>i</text></g>),
  brush: (<g><path d="M24 2L15 9" stroke="#e9a93a" strokeWidth="2.500" /><path d="M0 10L8 8L14 20L8 22L3 19Z" fill="#d8332a" /><path d="M5 9L14 6L19 13L11 21Z" fill="#f6d24a" /><path d="M3 15L8 13L11 19L6 21Z" fill="#3f9bd8" /></g>),
  group: (<g><path d="M1 8V23H14" stroke="#777" strokeWidth="3" fill="none" /><rect x="5" y="4" width="16" height="14" fill="#b9c2c5" /><path d="M10 1V18M16 1V18" stroke="#6b767a" strokeWidth="2" /><rect x="14" y="14" width="10" height="10" rx="2" fill="#4e9a68" /><path d="M19 16V22M16 19H22" stroke="#fff" strokeWidth="2" /></g>),
  eye: (<g><path d="M0 13C6 5 18 5 23 13C17 20 6 20 0 13Z" fill="#e6e6e6" /><circle cx="12" cy="12" r="5" fill="#4a86bf" /><circle cx="12" cy="12" r="2.200" fill="#111" /><path d="M0 12C5 3 18 3 23 11" stroke="#999" strokeWidth="1.500" fill="none" /><path d="M20 20H28L24 25Z" fill="#d4d4d4" /></g>),
  funnelMenu: (<g><Funnel /><path d="M20 20H28L24 25Z" fill="#d4d4d4" /></g>),
  exprOff: (<g><rect x="12" y="11" width="12" height="12" rx="2" fill="#5c5c5c" /><path d="M15 14H21L18.500 17V21H17.500V17Z" fill="#333" /></g>),
  remove: (<g><rect x="1" y="0" width="19" height="20" fill="#eeeee8" /><rect x="14" y="14" width="10" height="8" rx="2.500" fill="#dc3a44" /><path d="M16 18H22" stroke="#fff" strokeWidth="2" /></g>),
};

const Icon = ({ name, size }: { name: string; size?: number }) => (
  <Glyph viewBox="0 0 24 24" $size={size}>{icons[name]}</Glyph>
);

/** "|" is a drag handle, "v" a menu arrow, ":" a separator, "*name" a checked button. */
const Tools = ({ items }: { items: string }) => (
  <>
    {items.split(' ').map((it, i) => {
      if (it === '|') return <Handle key={i} $first={i === 0} />;
      if (it === 'v') return <MenuArrow key={i} />;
      if (it === ':') return <Separator key={i} />;
      const checked = it.startsWith('*');
      return (
        <ToolCell key={i}>
          <ToolButton $checked={checked}><Icon name={checked ? it.slice(1) : it} /></ToolButton>
        </ToolCell>
      );
    })}
  </>
);

/* ---------- form parts ---------- */

const Field = styled.div<{ $w: number; $h?: number; $dim?: boolean; $size?: number; $pad?: number }>`
  display: flex;
  align-items: center;
  flex: none;
  width: ${(p) => p.$w}px;
  height: ${(p) => p.$h ?? 23}px;
  padding-left: ${(p) => p.$pad ?? 5}px;
  border-radius: 2px;
  background: #1e1e1e;
  color: ${(p) => (p.$dim ? '#7d7d7d' : '#e6e6e6')};
  font-size: ${(p) => p.$size ?? 12}px;
  letter-spacing: 0.2px;
  white-space: nowrap;
`;

const FieldText = styled.span`
  flex: 1;
`;

const SpinBox = styled.span<{ $h?: number }>`
  display: flex;
  flex-direction: column;
  align-items: center;
  justify-content: center;
  gap: 4px;
  flex: none;
  width: 14.5px;
  height: ${(p) => p.$h ?? 22}px;
  border: 1px solid #5c5c5c;
  border-radius: 2px;
  background: #404040;
  &::before {
    content: '';
    border: 4px solid transparent;
    border-bottom: 4.5px solid #c8c8c8;
    border-top: 0;
  }
  &::after {
    content: '';
    border: 4px solid transparent;
    border-top: 4.5px solid #c8c8c8;
    border-bottom: 0;
  }
`;

const Clear = styled.svg`
  width: 14px;
  height: 11px;
  margin-right: 12px;
`;

const Combo = styled.div`
  display: flex;
  align-items: center;
  justify-content: space-between;
  flex: none;
  width: 105px;
  height: 24px;
  margin: 0 2px 0 3.500px;
  padding: 0 7px 0 4px;
  border: 1px solid #565656;
  border-radius: 2px;
  background: linear-gradient(#3f3f3f, #363636);
  color: #060606;
  font-size: 14px;
  font-weight: 500;
  &::after {
    content: '';
    border: 4px solid transparent;
    border-top: 5px solid #161616;
    border-bottom: 0;
  }
`;

const Offset = styled.div`
  display: flex;
  width: 92.100px;
  padding-left: 2.800px;
`;

/* ---------- docks ---------- */

const Body = styled.main`
  display: flex;
  flex: 1;
  min-height: 0;
`;

const DockArea = styled.aside`
  display: flex;
  width: 435px;
  flex: none;
`;

const DockColumn = styled.div`
  display: flex;
  flex-direction: column;
  width: 426px;
`;

const SideSplitter = styled.div`
  display: flex;
  justify-content: center;
  width: 9px;
  padding-top: 449px;
  padding-left: 3px;
  &::after {
    content: '';
    width: 2px;
    height: 19px;
    background: repeating-linear-gradient(0deg, #8f8f8f 0 2px, transparent 2px 3.3px);
  }
`;

const Splitter = styled.div<{ $h: number }>`
  display: flex;
  align-items: center;
  justify-content: center;
  height: ${(p) => p.$h}px;
  flex: none;
  padding-left: 4px;
  &::after {
    content: '';
    width: 19px;
    height: 2px;
    background: repeating-linear-gradient(90deg, #9a9a9a 0 2px, transparent 2px 3.3px);
  }
`;

const DockHead = styled.div<{ $h?: number }>`
  display: flex;
  align-items: center;
  justify-content: space-between;
  height: ${(p) => p.$h ?? 22}px;
  flex: none;
  padding: 0 0 1px 3px;
  font-size: 12px;
  letter-spacing: -0.07px;
`;

const HeadIcons = styled.svg`
  width: 27px;
  height: 12px;
`;

const DockTools = styled.div<{ $h: number; $pb?: number }>`
  display: flex;
  align-items: center;
  height: ${(p) => p.$h}px;
  flex: none;
  padding-left: 8px;
  padding-bottom: ${(p) => p.$pb ?? 1.500}px;
`;

const Slot = styled.span<{ $w?: number }>`
  display: flex;
  flex: none;
  width: ${(p) => p.$w ?? 26.8}px;
`;

const Message = styled.p`
  display: flex;
  align-items: center;
  height: 49px;
  flex: none;
  margin: 0;
  padding: 0 0 2px 1px;
  font-size: 13.500px;
  letter-spacing: 0.095px;
  white-space: nowrap;
`;

const Split = styled.div<{ $h: number }>`
  display: flex;
  height: ${(p) => p.$h}px;
  flex: none;
`;

const List = styled.ul`
  flex: 1;
  margin: 0;
  padding: 0;
  overflow: hidden;
  list-style: none;
  background: #1e1e1e;
`;

const ListItem = styled.li<{ $selected?: boolean }>`
  display: flex;
  align-items: center;
  gap: 8px;
  width: ${(p) => (p.$selected ? '279px' : 'auto')};
  height: 19.310px;
  padding-left: 38.500px;
  font-size: 13.500px;
  letter-spacing: 0.15px;
  color: ${(p) => (p.$selected ? '#fff' : '#e3e3e3')};
  background: ${(p) => (p.$selected ? '#474747' : 'transparent')};
`;

const VScroll = styled.div`
  display: flex;
  flex-direction: column;
  width: 14px;
  flex: none;
  background: #363636;
`;

const ScrollButton = styled.span`
  display: flex;
  align-items: center;
  justify-content: center;
  width: 14px;
  height: 14px;
  flex: none;
  border: 1px solid #545454;
  background: #383838;
`;

const ScrollThumb = styled.span<{ $before: number; $size: number; $row?: boolean }>`
  flex: none;
  ${(p) =>
    p.$row
      ? `margin-left: ${p.$before}px; width: ${p.$size}px; height: 14px;`
      : `margin-top: ${p.$before}px; height: ${p.$size}px; width: 14px;`}
  border: 1px solid #565656;
  background: #404040;
`;

const Spring = styled.span`
  flex: 1;
`;

const HScroll = styled.div`
  display: flex;
  height: 14px;
  width: 412px;
  flex: none;
  background: #363636;
`;

const TreePane = styled.div`
  display: flex;
  flex-direction: column;
  flex: 1;
  overflow: hidden;
  background: #1e1e1e;
`;

const LayerRow = styled.div`
  display: flex;
  align-items: center;
  height: 21px;
  margin-top: 2px;
  padding-left: 6.500px;
  font-size: 14px;
  font-weight: 700;
  letter-spacing: 0.7px;
`;

const LayerName = styled.span`
  margin-left: 7px;
`;

const Band = styled.div`
  height: 18px;
  padding: 0 0 2px 46px;
  font-size: 13.500px;
  letter-spacing: 0.3px;
  line-height: 16px;
`;

const Ramp = styled.div`
  display: flex;
  height: 206px;
  padding-left: 46px;
`;

const RampBar = styled.div`
  width: 35px;
  height: 205px;
  background: linear-gradient(#fff, #000);
`;

const RampLabels = styled.div`
  display: flex;
  flex-direction: column;
  justify-content: space-between;
  padding-left: 6px;
  font-size: 13.500px;
  font-weight: 500;
  letter-spacing: 0.8px;
  line-height: 18px;
  color: #cfcfcf;
`;

const Arrow = ({ dir }: { dir: 'up' | 'down' | 'left' | 'right' }) => {
  const turn = { up: 0, right: 90, down: 180, left: 270 }[dir];
  return (
    <Glyph viewBox="0 0 8 8" $size={8}>
      <path d="M0 6L4 1.500L8 6Z" fill="#c4c4c4" transform={`rotate(${turn} 4 4)`} />
    </Glyph>
  );
};

const DockTitle = ({ children, h }: { children: string; h?: number }) => (
  <DockHead $h={h}>
    {children}
    <HeadIcons viewBox="0 0 27 12" fill="none" stroke="#8f8f8f">
      <rect x=".5" y=".5" width="11" height="11" rx="1.500" />
      <path d="M2.500 5H7V9.500H2.500ZM5 5V2.500H9.500V7H7" />
      <rect x="15.500" y=".5" width="11" height="11" rx="1.500" />
      <path d="M17.500 2.500L24.500 9.500M24.500 2.500L17.500 9.500" />
    </HeadIcons>
  </DockHead>
);

const GridIcon = () => (
  <Glyph viewBox="0 0 15 15" $size={15}>
    {[0, 5.300, 10.600].flatMap((x) => [0, 5.300, 10.600].map((y) => <rect key={`${x}${y}`} x={x} y={y} width="4.400" height="4.400" fill="#6a9fd0" />))}
  </Glyph>
);

const sources = [
  'Esri National Geographic', 'Esri Ocean', 'Esri Satellite', 'Esri Standard', 'Esri Terrain', 'Esri Topo World',
  'Esri Transportation', 'Google', 'Google Maps', 'Google Satellite', 'Google Satellite Hybrid', 'Google Terrain',
  'Google Terrain Hybrid', 'Mapzen Global Terrain', 'Open Weather Map Clouds', 'Open Weather Map Temperature',
  'Open Weather Map Wind Speed', 'OpenStreetMap', 'OpenStreetMap H.O.T.', 'OpenStreetMap Monochrome',
  'OpenStreetMap Standard', 'OpenTopoMap',
];

/* ---------- map ---------- */

const Canvas = styled.section`
  flex: 1;
  margin-top: 2px;
  background: #fff;
  overflow: hidden;
`;

const MapDrawing = styled.svg`
  display: block;
  width: 1491px;
  height: 909px;
`;

const coast =
  'M-40 930L60 860L130 820L250 760L330 680L340 640L325 450L305 300L345 100L420 75L520 45L1320 40L1320 1395L1250 1392L1200 1425L1100 1427L1030 1430L990 1450L920 1478L850 1493L765 1500L740 1465L710 1425L640 1420L575 1412L555 1370L550 1270L525 1240L480 1212L430 1200L400 1203L350 1215L320 1205L280 1175L225 1168L205 1185L190 1150L150 1105L100 1075L40 1030Z';

/** Lowland plateaus that brighten towards the east: outline, west x, east x, west, middle and east greys. */
const plateaus: [string, number, number, string, string, string][] = [
  ['M325 440L305 270L345 110L430 95L640 72L820 50L1060 56L1122 105L1132 170L1100 220L1065 275L1020 300L965 350L880 372L780 340L700 362L600 392L470 420Z', 300, 1130, '#060606', '#1a1a1a', '#3c3c3c'],
  ['M338 480L520 442L700 408L790 388L840 408L865 460L850 530L815 560L740 575L600 590L345 635Z', 320, 860, '#0c0c0c', '#232323', '#393939'],
  ['M260 770L380 670L530 632L650 612L690 660L712 740L722 830L740 868L640 825L590 880L520 890L470 810L380 800Z', 240, 720, '#040404', '#222', '#3b3b3b'],
  ['M20 970L90 890L150 835L290 822L440 838L464 910L452 1000L405 1060L370 1110L400 1190L350 1215L280 1175L225 1168L205 1185L150 1105L40 1030Z', 0, 470, '#000', '#151515', '#2b2b2b'],
];

const uplands: [string, string][] = [
  ['M670 615L740 625L775 690L740 735L690 700Z', '#2e2e2e'],
  ['M870 655L930 590L1030 510L1100 590L1108 655L1070 698L960 728Z', '#434343'],
  ['M985 700L1040 630L1095 600L1103 650L1075 690Z', '#585858'],
  ['M870 695L960 730L1022 790L980 838L910 858L878 800Z', '#4b4b4b'],
  ['M1050 400L1110 310L1190 230L1295 190L1310 260L1225 340L1208 470L1142 562L1090 575L1040 520Z', '#3e3e3e'],
  ['M1090 440L1200 400L1208 460L1160 525L1130 562L1085 562Z', '#525252'],
  ['M1200 300L1310 240L1310 540L1230 520Z', '#404040'],
  ['M1262 410L1310 380L1310 540L1262 520Z', '#5e5e5e'],
  ['M1135 600L1200 555L1262 575L1265 640L1210 695L1160 660Z', '#4b4b4b'],
  ['M1065 780L1160 710L1230 715L1310 640L1310 815L1200 835L1095 835Z', '#4e4e4e'],
  ['M1170 815L1225 760L1268 790L1225 826Z', '#8a8a8a'],
  ['M735 865L860 885L885 850L940 880L1060 835L1105 900L1065 965L960 1035L860 965L740 910Z', '#4c4c4c'],
  ['M735 765L850 780L866 855L735 850Z', '#353535'],
  ['M590 1010L630 920L730 875L765 950L900 985L970 1045L840 1095L700 1075Z', '#444'],
  ['M735 1000L780 940L880 980L960 1010L1080 1045L1190 1055L1310 1100L1330 1420L1190 1440L1030 1440L850 1505L765 1515L700 1430L575 1420L545 1340L540 1260L590 1170L680 1130L760 1100L860 1160L900 1070Z', '#585858'],
  ['M920 1060L1000 1030L1180 1062L1310 1105L1310 1230L1150 1235L1075 1290L1045 1160Z', '#787878'],
  ['M545 1240L620 1185L670 1240L745 1275L735 1360L640 1425L575 1420L545 1340Z', '#727272'],
  ['M670 1150L740 1122L820 1142L875 1185L855 1238L740 1265L665 1232Z', '#6e6e6e'],
  ['M720 1400L760 1388L830 1450L900 1375L1060 1312L1130 1320L1310 1360L1320 1410L1200 1440L1030 1445L850 1510L755 1515Z', '#8a8a8a'],
  ['M1085 1300L1150 1225L1230 1165L1320 1190L1330 1410L1230 1380L1120 1340Z', '#bcbcbc'],
  ['M1150 1090L1240 1092L1300 1120L1310 1190L1200 1190Z', '#949494'],
];

const basins: [string, string][] = [
  ['M595 1240L680 1252L735 1292L700 1325L630 1310L590 1275Z', '#3a3a3a'],
  ['M905 1085L960 1125L1035 1150L1050 1240L1030 1310L920 1345L860 1450L800 1420L765 1340L840 1250L860 1170Z', '#2e2e2e'],
  ['M1080 940L1200 930L1310 940L1310 1065L1200 1035L1060 1005Z', '#282828'],
  ['M880 390L1020 320L1055 400L1015 500L900 590L800 635L745 595L860 540Z', '#191919'],
];

/** Main valley courses, drawn thick, from which side gullies branch off. */
const valleys: { pts: number[][]; w: number; reach: number; grey: string }[] = [
  { pts: [[320, 455], [450, 432], [600, 402], [700, 366], [780, 348], [880, 384], [980, 340], [1060, 275]], w: 22, reach: 42, grey: '#0c0c0c' },
  { pts: [[325, 658], [450, 628], [540, 608], [640, 592], [720, 597], [800, 650]], w: 18, reach: 50, grey: '#080808' },
  { pts: [[860, 680], [920, 702], [960, 736], [1040, 766], [1080, 830], [1140, 880], [1200, 930]], w: 17, reach: 70, grey: '#121212' },
  { pts: [[1030, 520], [1060, 545], [1095, 580], [1190, 553], [1300, 553]], w: 11, reach: 62, grey: '#131313' },
  { pts: [[1045, 388], [1110, 405], [1150, 392], [1210, 412]], w: 7, reach: 56, grey: '#1e1e1e' },
  { pts: [[270, 806], [400, 820], [450, 835], [480, 880], [530, 935], [620, 1040], [700, 1075], [780, 1110], [860, 1180]], w: 19, reach: 75, grey: '#080808' },
  { pts: [[610, 845], [700, 862], [740, 895], [860, 905], [960, 900]], w: 15, reach: 50, grey: '#181818' },
  { pts: [[865, 690], [872, 830], [862, 905]], w: 9, reach: 55, grey: '#141414' },
  { pts: [[872, 845], [910, 870], [960, 850]], w: 8, reach: 34, grey: '#171717' },
  { pts: [[295, 830], [300, 900], [308, 990]], w: 7, reach: 46, grey: '#0b0b0b' },
  { pts: [[535, 640], [545, 672], [582, 700], [590, 735]], w: 9, reach: 30, grey: '#0e0e0e' },
  { pts: [[480, 800], [540, 790], [578, 826]], w: 8, reach: 28, grey: '#0c0c0c' },
  { pts: [[1055, 1330], [1072, 1275], [1110, 1220], [1150, 1170]], w: 9, reach: 75, grey: '#454545' },
  { pts: [[640, 1060], [652, 1150], [662, 1235]], w: 12, reach: 60, grey: '#1e1e1e' },
  { pts: [[760, 930], [830, 965], [920, 990], [940, 1010]], w: 7, reach: 56, grey: '#262626' },
  { pts: [[1290, 260], [1240, 335], [1215, 420], [1195, 500]], w: 12, reach: 52, grey: '#272727' },
  { pts: [[1130, 600], [1175, 645], [1180, 690], [1240, 740]], w: 7, reach: 50, grey: '#232323' },
  { pts: [[880, 1165], [960, 1122], [1040, 1150], [1058, 1240], [1030, 1315], [920, 1350], [870, 1425]], w: 5, reach: 80, grey: '#3a3a3a' },
  { pts: [[600, 1270], [640, 1315], [700, 1320], [740, 1290]], w: 5, reach: 70, grey: '#3d3d3d' },
  { pts: [[700, 1070], [800, 1060], [900, 1075]], w: 6, reach: 62, grey: '#2a2a2a' },
  { pts: [[400, 1125], [470, 1150], [540, 1150], [600, 1100]], w: 34, reach: 56, grey: '#0d0d0d' },
  { pts: [[500, 930], [560, 1010], [520, 1090], [450, 1110]], w: 50, reach: 40, grey: '#0e0e0e' },
];

const ridges: [string, number, string][] = [
  ['M556 1300Q560 1230 620 1195L655 1170M640 1400L720 1345L760 1325M560 1345L600 1372L650 1372', 10, '#9a9a9a'],
  ['M690 1160L740 1142L800 1150M690 1200L790 1190L862 1222M700 1250L780 1268', 12, '#8c8c8c'],
  ['M490 1190L540 1175L590 1150M560 1210L610 1180', 14, '#5c5c5c'],
  ['M1090 880L1082 930L1045 970M1060 940L1010 1000M1000 960L980 1000M940 1000L900 1030', 11, '#7a7a7a'],
  ['M920 1060L1000 1042L1060 1058L1160 1066L1200 1090L1250 1098L1285 1125', 18, '#909090'],
  ['M1200 245L1270 215M1140 550L1190 500M1240 770L1290 700M1170 800L1250 790', 12, '#707070'],
  ['M872 872L900 895L930 880M740 842L790 835M745 865L860 890', 9, '#6a6a6a'],
  ['M740 1402L760 1470L850 1488L885 1410L930 1370M720 1395L775 1402', 11, '#a6a6a6'],
  ['M1100 1290L1160 1215L1230 1165M1120 1340L1220 1365', 14, '#c2c2c2'],
  ['M340 1207L380 1197L425 1190M330 1180L390 1155M480 1205L530 1190', 11, '#585858'],
];

const makeRandom = (seed: number) => () => {
  seed = (seed * 16807) % 2147483647;
  return seed / 2147483647;
};

/** Dendritic lines running up the slopes from both sides of each valley. */
const branches = (seed: number, spacing: number) => {
  const rnd = makeRandom(seed);
  const out: { d: string; w: number }[] = [];
  const grow = (x: number, y: number, a: number, len: number, w: number, depth: number) => {
    let d = `M${x.toFixed(1)} ${y.toFixed(1)}`;
    for (let i = 0; i < 4; i++) {
      a += (rnd() - 0.5) * 0.6;
      x += (Math.cos(a) * len) / 4;
      y += (Math.sin(a) * len) / 4;
      d += `L${x.toFixed(1)} ${y.toFixed(1)}`;
      if (depth > 0 && rnd() < 0.5) grow(x, y, a + (rnd() < 0.5 ? -1 : 1) * (0.5 + rnd() * 0.4), len * 0.5, w * 0.7, depth - 1);
    }
    out.push({ d, w });
  };
  valleys.forEach(({ pts, reach }) => {
    for (let k = 0; k < pts.length - 1; k++) {
      const [x1, y1] = pts[k];
      const [x2, y2] = pts[k + 1];
      const dist = Math.hypot(x2 - x1, y2 - y1);
      const dir = Math.atan2(y2 - y1, x2 - x1);
      for (let t = 5; t < dist; t += spacing * (0.7 + rnd() * 0.6)) {
        const side = rnd() < 0.5 ? -1 : 1;
        grow(x1 + ((x2 - x1) * t) / dist, y1 + ((y2 - y1) * t) / dist, dir + side * (1 + rnd() * 0.6), reach * (0.5 + rnd() * 0.8), 7, 1);
      }
    }
  });
  return out;
};
const gullies = branches(4711, 11);
const spurs = branches(90210, 15);

const line = (pts: number[][]) => 'M' + pts.map((p) => p.join(' ')).join('L');

const Blur = ({ id, by }: { id: string; by: number }) => (
  <filter id={id} x="-20%" y="-20%" width="140%" height="140%" colorInterpolationFilters="sRGB">
    <feGaussianBlur stdDeviation={by} />
  </filter>
);

const MapLayer = () => (
  <MapDrawing viewBox="496 239 1491 909">
    <defs>
      <clipPath id="extent"><path d="M807 342L1000 342.500L1250 343.500L1555 346.500L1551.500 640L1548 1002L1250 999.500L807 998Z" /></clipPath>
      <clipPath id="land"><path d={coast} /></clipPath>
      <filter id="rough" x="-5%" y="-5%" width="110%" height="110%" colorInterpolationFilters="sRGB">
        <feTurbulence type="fractalNoise" baseFrequency="0.022" numOctaves="5" seed="8" result="n" />
        <feDisplacementMap in="SourceGraphic" in2="n" scale="52" xChannelSelector="R" yChannelSelector="G" />
        <feGaussianBlur stdDeviation="1.500" />
      </filter>
      <filter id="edge" x="-5%" y="-5%" width="110%" height="110%" colorInterpolationFilters="sRGB">
        <feTurbulence type="fractalNoise" baseFrequency="0.06" numOctaves="3" seed="3" result="n" />
        <feDisplacementMap in="SourceGraphic" in2="n" scale="5" xChannelSelector="R" yChannelSelector="G" />
      </filter>
      <Blur id="blurFog" by={22} />
      <Blur id="blurWide" by={15} />
      <Blur id="blurMid" by={7} />
      <Blur id="blurThin" by={2} />
      <linearGradient id="base" x1="300" x2="1000" y1="0" y2="0" gradientUnits="userSpaceOnUse">
        <stop offset="0" stopColor="#000" /><stop offset=".5" stopColor="#101010" /><stop offset="1" stopColor="#282828" />
      </linearGradient>
      <linearGradient id="westShade" x1="-40" x2="380" y1="0" y2="0" gradientUnits="userSpaceOnUse">
        <stop offset="0" stopColor="#000" /><stop offset=".3" stopColor="#000" stopOpacity=".6" /><stop offset="1" stopColor="#000" stopOpacity="0" />
      </linearGradient>
      <linearGradient id="topShade" x1="560" x2="620" y1="40" y2="210" gradientUnits="userSpaceOnUse">
        <stop offset="0" stopColor="#000" stopOpacity=".8" /><stop offset="1" stopColor="#000" stopOpacity="0" />
      </linearGradient>
      {plateaus.map(([, x1, x2, a, b, c], i) => (
        <linearGradient key={i} id={`plateau${i}`} x1={x1} x2={x2} y1="0" y2="60" gradientUnits="userSpaceOnUse">
          <stop offset="0" stopColor={a} /><stop offset=".5" stopColor={b} /><stop offset="1" stopColor={c} />
        </linearGradient>
      ))}
    </defs>
    <g clipPath="url(#extent)">
      <rect x="800" y="335" width="760" height="672" fill="#000" />
      <g filter="url(#edge)">
        <g transform="translate(1120 330) scale(.33333)">
          <path
            d="M745 1430L765 1520L860 1510L940 1470L1030 1430L1200 1420L1400 1380V1500L1200 1462L1080 1445L960 1465L850 1510Z"
            fill="#7a7a7a" filter="url(#blurFog)"
          />
          <g clipPath="url(#land)">
            <path d={coast} fill="url(#base)" />
            <g filter="url(#rough)">
              <g filter="url(#blurMid)">
                {plateaus.map(([d], i) => <path key={i} d={d} fill={`url(#plateau${i})`} />)}
              </g>
              <g filter="url(#blurWide)">
                {uplands.map(([d, c], i) => <path key={i} d={d} fill={c} />)}
                {basins.map(([d, c], i) => <path key={i} d={d} fill={c} />)}
              </g>
              <g filter="url(#blurMid)" fill="none" strokeLinecap="round" strokeLinejoin="round">
                {ridges.map(([d, w, c], i) => <path key={i} d={d} strokeWidth={w} stroke={c} opacity=".8" />)}
              </g>
              <g filter="url(#blurThin)" fill="none" strokeLinecap="round" strokeLinejoin="round">
                <g stroke="#fff" opacity=".75">{spurs.map((s, i) => <path key={i} d={s.d} strokeWidth={s.w} opacity=".045" />)}</g>
                <g stroke="#000">{gullies.map((s, i) => <path key={i} d={s.d} strokeWidth={s.w} opacity=".13" />)}</g>
              </g>
              <g filter="url(#blurMid)" fill="none" strokeLinecap="round" strokeLinejoin="round">
                {valleys.map((v, i) => <path key={i} d={line(v.pts)} strokeWidth={v.w + 3} stroke={v.grey} />)}
              </g>
            </g>
            <rect x="-40" y="40" width="420" height="1200" fill="url(#westShade)" />
            <rect x="280" y="40" width="760" height="220" fill="url(#topShade)" />
          </g>
        </g>
      </g>
    </g>
  </MapDrawing>
);

/* ---------- status bar ---------- */

const StatusBar = styled.footer`
  display: flex;
  align-items: center;
  height: 33px;
  flex: none;
  padding: 1px 0 0 3px;
  border-top: 1px solid #262626;
  background: #333;
  font-size: 12px;
  font-weight: 500;
`;

const Locator = styled.div`
  display: flex;
  align-items: center;
  gap: 9px;
  flex: none;
  width: 229px;
  height: 25px;
  margin-right: 758.500px;
  padding-left: 9px;
  border-radius: 3px;
  background: #212121;
  font-size: 13px;
  font-weight: 400;
  letter-spacing: 0.3px;
  color: #9d9d9d;
`;

const StatusLabel = styled.span<{ $w: number; $dark?: boolean }>`
  flex: none;
  width: ${(p) => p.$w}px;
  white-space: nowrap;
  letter-spacing: ${(p) => (p.$dark ? 0 : -0.05)}px;
  color: ${(p) => (p.$dark ? '#050505' : '#e8e8e8')};
`;

const StatusIcon = styled.svg<{ $w: number; $box: number }>`
  flex: none;
  width: ${(p) => p.$w}px;
  height: ${(p) => p.$box}px;
  overflow: visible;
`;

const DropButton = styled.span`
  display: flex;
  align-items: center;
  justify-content: center;
  width: 21px;
  height: 23px;
  border: 1px solid #555;
  background: #404040;
  &::after {
    content: '';
    border: 4.500px solid transparent;
    border-top: 5px solid #161616;
    border-bottom: 0;
  }
`;

const CheckBox = styled.span`
  display: flex;
  align-items: center;
  justify-content: center;
  flex: none;
  width: 14px;
  height: 14px;
  margin-right: 6px;
  background: #222;
`;

const Check = ({ size = 12 }: { size?: number }) => (
  <Glyph viewBox="0 0 12 12" $size={size}><path d="M2 6.500L5 10.500L10 1" stroke="#e6e6e6" strokeWidth="1.500" fill="none" /></Glyph>
);

export default function App() {
  return (
    <Desktop>
      <Global />
      <Window>
        <TitleBar>
          <Lights>
            <Light $color="#ff5f57" />
            <Light $color="#febc2e" />
            <Light $color="#28c840" />
          </Lights>
          <WindowTitle>*chersonesus — QGIS</WindowTitle>
        </TitleBar>

        <ToolbarRow>
          <Tools items="| newDoc open save layout layoutMgr style | *pan panSel zoomIn zoomOut zoomFull zoomSel zoomLayer zoomNative zoomLast zoomNext mapView view3d bookmarkNew bookmarks clock refresh | selectRect v selectForm v deselect v selectLoc v | identify fieldCalc toolbox sigma table v measure v tips action v" />
        </ToolbarRow>
        <ToolbarRow>
          <Tools items="| dsm geopackage shapefile spatialite memory mesh virtual | editsCurrent pencil saveEdits addLine v addPoint vertex v multiEdit trash cut copy paste undo redo | label diagram : labelPin labelRed : labelPinOff labelShow labelMove labelRotate labelEdit | search | python meshTool v floppy stack | help |" />
        </ToolbarRow>
        <ToolbarRow>
          <Tools items="| cad moveFeat v blobRotate blobScale simplify addRing addPart fillRing delRing delPart reshape offset splitFeat trim splitA splitB mergeF mergeAttr rotSym v | *magnet snapV *snapDots" />
          <Field $w={89} $size={14}>
            <FieldText>12</FieldText>
            <Clear viewBox="0 0 14 11"><path d="M0 5.500L4 0H14V11H4Z" fill="#cfcfcf" /><path d="M5.500 3L10.500 8M10.500 3L5.500 8" stroke="#222" strokeWidth="1.400" /></Clear>
          </Field>
          <SpinBox />
          <Combo>px</Combo>
          <Tools items="topo overlap snapX tracing v selfSnap" />
        </ToolbarRow>
        <ToolbarRow $height={40}>
          <Tools items="| ad md rd" />
          <Offset>
            <Field $w={73.500} $dim $size={14} $pad={4}>0.000</Field>
            <SpinBox $h={23} />
          </Offset>
          <Tools items="sc adj blank tMinus tPlus tt back" />
        </ToolbarRow>

        <Body>
          <DockArea>
            <DockColumn>
              <DockTitle>Advanced Digitizing</DockTitle>
              <DockTools $h={32}>
                <Slot $w={25}><Icon name="cad" size={17} /></Slot>
                <Separator $gap={9} />
                <Slot><Icon name="construct" size={17} /></Slot>
                <Slot><Icon name="parallel" size={17} /></Slot>
                <Slot $w={23}><Icon name="perpend" size={17} /></Slot>
                <Separator $gap={11} />
                <Slot $w={25}><Icon name="gearOff" size={17} /></Slot>
                <Separator $gap={10} />
                <Slot $w={34}><Icon name="snapCursor" size={17} /></Slot>
                <Slot><Icon name="floatDots" size={17} /></Slot>
              </DockTools>
              <Message>Advanced digitizing tools are not enabled for the current map tool</Message>
              <Splitter $h={4} />

              <DockTitle>Browser</DockTitle>
              <DockTools $h={33} $pb={3}>
                {['addItem', 'refresh', 'funnel', 'treeUp', 'info'].map((n) => (
                  <Slot key={n}><Icon name={n} size={16} /></Slot>
                ))}
              </DockTools>
              <Split $h={425}>
                <List>
                  {sources.map((s) => (
                    <ListItem key={s} $selected={s === 'Mapzen Global Terrain'}><GridIcon />{s}</ListItem>
                  ))}
                </List>
                <VScroll>
                  <ScrollButton><Arrow dir="up" /></ScrollButton>
                  <ScrollThumb $before={164} $size={154} />
                  <Spring />
                  <ScrollButton><Arrow dir="down" /></ScrollButton>
                </VScroll>
              </Split>
              <Splitter $h={8} />

              <DockTitle h={20}>Layers</DockTitle>
              <DockTools $h={34}>
                <Slot><Icon name="brush" size={16} /></Slot>
                <Slot><Icon name="group" size={16} /></Slot>
                <Slot><Icon name="eye" size={16} /></Slot>
                <Slot><Icon name="funnelMenu" size={16} /></Slot>
                <Slot $w={22}><Icon name="exprOff" size={16} /></Slot>
                <Slot $w={17.500}><MenuArrow /></Slot>
                <Slot><Icon name="treeDown" size={16} /></Slot>
                <Slot><Icon name="treeUp" size={16} /></Slot>
                <Slot><Icon name="remove" size={16} /></Slot>
              </DockTools>
              <Split $h={248}>
                <TreePane>
                  <LayerRow>
                    <Slot $w={20.500}><Arrow dir="down" /></Slot>
                    <Slot $w={21}><Check /></Slot>
                    <Glyph viewBox="0 0 15 15" $size={15}>
                      <rect width="15" height="15" fill="#1f3c58" />
                      <path d="M5 0H10V5H5ZM0 5H5V10H0ZM10 5H15V10H10ZM5 10H10V15H5Z" fill="#a9c8e6" />
                      <rect x="5" y="5" width="5" height="5" fill="#28507a" />
                    </Glyph>
                    <LayerName>AP_19689_FBD_F0880_RT1.dem</LayerName>
                  </LayerRow>
                  <Band>Band 1 (Gray)</Band>
                  <Ramp>
                    <RampBar />
                    <RampLabels><span>1600</span><span>0</span></RampLabels>
                  </Ramp>
                </TreePane>
                <VScroll>
                  <ScrollButton><Arrow dir="up" /></ScrollButton>
                  <Spring />
                  <ScrollThumb $before={0} $size={29} />
                  <ScrollButton><Arrow dir="down" /></ScrollButton>
                </VScroll>
              </Split>
              <HScroll>
                <ScrollButton><Arrow dir="left" /></ScrollButton>
                <ScrollThumb $row $before={1} $size={235} />
                <Spring />
                <ScrollButton><Arrow dir="right" /></ScrollButton>
              </HScroll>
            </DockColumn>
            <SideSplitter />
          </DockArea>
          <Canvas><MapLayer /></Canvas>
        </Body>

        <StatusBar>
          <Locator>
            <Glyph viewBox="0 0 14 14" $size={14}>
              <circle cx="5.800" cy="5.800" r="4.800" fill="none" stroke="#a5a5a5" strokeWidth="1.200" />
              <path d="M9.500 9.500L13.500 13.500" stroke="#a5a5a5" strokeWidth="1.400" />
            </Glyph>
            Type to locate (⌘K)
          </Locator>
          <StatusLabel $w={66}>Coordinate</StatusLabel>
          <Field $w={127} $pad={9}>3644352,5585150</Field>
          <StatusIcon viewBox="0 0 35 18" $w={35} $box={18}>
            <path d="M6 1L11 9L10 1L12 .5L14 8L18 11V15L14 17L10 15L9 11L5 3Z" fill="#eee" stroke="#111" strokeWidth=".8" />
            <circle cx="16" cy="12" r="3.200" fill="#222" stroke="#fff" strokeWidth="1.200" />
            <path d="M14 5L19 1M5 7L8 8M17 6L20 4" stroke="#111" />
          </StatusIcon>
          <StatusLabel $w={35}>Scale</StatusLabel>
          <Field $w={98} $pad={5}><FieldText>1:453706</FieldText><DropButton /></Field>
          <StatusIcon viewBox="0 0 37 17" $w={37} $box={17}>
            <path d="M17 8V5A3.700 4 0 0 1 24.500 5V8" stroke="#9d9d9d" strokeWidth="2" fill="none" />
            <rect x="14.500" y="7.500" width="12.500" height="9" rx="1" fill="#787878" />
          </StatusIcon>
          <StatusLabel $w={57}>Magnifier</StatusLabel>
          <Field $w={98}><FieldText>100%</FieldText><SpinBox $h={23} /></Field>
          <StatusLabel $w={11}>{' '}</StatusLabel>
          <StatusLabel $w={57}>Rotation</StatusLabel>
          <Field $w={98}><FieldText>0.0 °</FieldText><SpinBox $h={23} /></Field>
          <StatusLabel $w={9}>{' '}</StatusLabel>
          <CheckBox><Check /></CheckBox>
          <StatusLabel $w={57.500}>Render</StatusLabel>
          <StatusIcon viewBox="0 0 19 15" $w={18} $box={15}>
            <circle cx="7.500" cy="7.500" r="7" fill="#bdbdbd" />
            <path d="M.5 7.500H14.500M2 3.500H13M2 11.500H13M7.500 .5V14.500M7.500 .5C3 4 3 11 7.500 14.500C12 11 12 4 7.500 .5" stroke="#666" strokeWidth=".8" fill="none" />
          </StatusIcon>
          <StatusLabel $w={88.500} $dark>EPSG:3857</StatusLabel>
          <StatusIcon viewBox="0 0 18 16" $w={18} $box={16}>
            <ellipse cx="8.500" cy="7" rx="8.500" ry="7" fill="#7a7a7a" />
            <path d="M9 12L16 16L15 10Z" fill="#7a7a7a" />
            {dots([[4.500, 7], [8.500, 7], [12.500, 7]], '#fff', 1.200)}
          </StatusIcon>
        </StatusBar>
      </Window>
    </Desktop>
  );
}
